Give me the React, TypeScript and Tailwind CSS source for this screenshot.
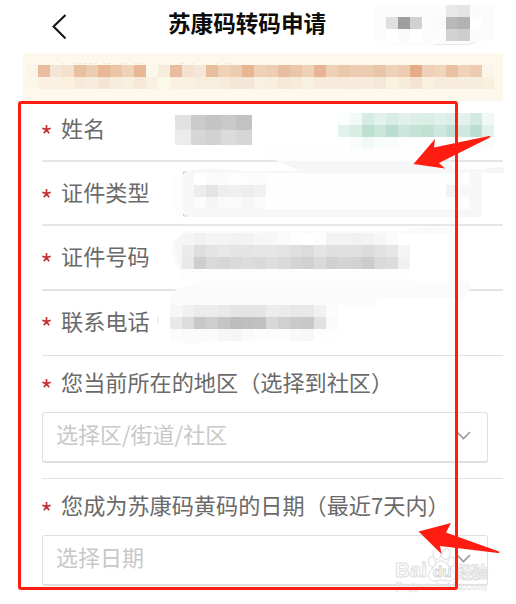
import React from 'react';
import { clsx } from 'clsx';

type MosaicProps = {
  x: number;
  y: number;
  w?: number;
  h?: number;
  rows: string[];
};

// One row per string, cells separated by spaces, "-" leaves a cell open
function Mosaic({ x, y, w = 12, h = 12, rows }: MosaicProps) {
  return (
    <g shapeRendering="crispEdges">
      {rows.map((row, r) =>
        row.split(' ').map((color, c) =>
          color === '-' ? null : (
            <rect key={`${r}-${c}`} x={x + c * w} y={y + r * h} width={w} height={h} fill={`#${color}`} />
          )
        )
      )}
    </g>
  );
}

function Label({ children }: { children: React.ReactNode }) {
  return (
    <div className="flex items-center whitespace-nowrap text-[22.15px] leading-8 text-[#6a6a6a]">
      <svg className="mr-[10px] mt-[4px] h-[9px] w-[9px] shrink-0" viewBox="0 0 9 9" fill="none" stroke="#c23236" strokeWidth="1.7">
        <path d="M4.5 0v4.6M.3 3.2l4.2 1.4M8.7 3.2 4.5 4.6M1.9 8.3l2.6-3.7M7.1 8.3 4.5 4.6" />
      </svg>
      {children}
    </div>
  );
}

function SelectBox({ placeholder, className }: { placeholder: string; className?: string }) {
  return (
    <div className={clsx('flex h-[51px] w-[446px] items-center justify-between rounded-[3px] border-[1.5px] border-b-2 border-[#e0e0e0] pl-[13px] pr-4', className)}>
      <span className="mt-[-8px] text-[22px] leading-8 text-[#c8c8c8]">{placeholder}</span>
      <svg className="mt-[-3px] h-[9px] w-[15px]" viewBox="0 0 15 9" fill="none" stroke="#999" strokeWidth="1.6">
        <path d="M1 1l6.5 6.5L14 1" />
      </svg>
    </div>
  );
}

function Redactions() {
  return (
    <svg className="pointer-events-none absolute left-0 top-0 h-[604px] w-[516px]" viewBox="0 0 516 604">
      {/* top right buttons */}
      <rect x="374" y="5" width="120" height="36" rx="5" fill="#fcfcfc" />
      <path d="M386 41h50l38-1v4l-4 2h-80z" fill="#fcfcfc" />
      <path d="M435 44.5h34l7-3" fill="none" stroke="#e9e9e9" />
      <Mosaic
        x={386}
        y={5}
        rows={[
          '- - - - - e9e9e9 e5e5e5 fbfbfb',
          'e0e0e0 9e9e9e d1d1d1 - fafafa b8b8b8 b2b2b2 ffffff',
          'ffffff fafafa ffffff - fcfcfc d3d3d3 cecece fbfbfb',
        ]}
      />

      {/* notice text */}
      <Mosaic
        x={26}
        y={65}
        rows={[
          'fbf5e7 e9bca0 f5e5d6 f3e0cd e8bf9f eccdb1 e7b796 ebc5a5 efd2b8 e8b895 fbf7ea f6ecdb e9bca0 f4e1cf f5e7d7 e8bd9b efd2b8 edcdb0 e7b58f efd1b7 eecdb3 e8bea0 e9c7a8 efd2b6 e7b593 eecfb7 eac8aa eccdb3 edcdb2 eac4a7 efd0b8 edccb2 e5ac87 efd0b8 f0d5bd eac0a3 f0d2b9 eecab0 fcf4e9',
          'fbf8e8 fbf1e3 faf1e2 faf1e1 f7ead9 f7ecdd f5e5d3 f8eddd f8f0df f5e8d7 f8f0e3 fcfae7 f9f0e2 f9f0e1 f8eedd f8eedd f7ecdb f5e6d6 f5e7d7 f9f1df f9efde f6e8d7 f7ead8 f8f0e0 f7ead8 f6ebdc f6ebdb f7ead8 f6ebdc f6e8d8 faf1df f7ecda f5e4d2 f9f0e0 f7eddd f8eddd f8eedf f7eddc f9efdd',
        ]}
      />
      <path d="M62 63.5h3M74 63.5h25M103 63.5h8M122 63.5h6M134 63.5h11M181 63.5h4M191 63.5h3M215 63.5h4M225 63.5h6" stroke="#f6e6d2" strokeWidth="1" strokeDasharray="3 2" />

      {/* name */}
      <g shapeRendering="crispEdges">
        <rect x="175" y="115" width="16" height="15" fill="#e2e2e2" />
        <rect x="191" y="115" width="14" height="15" fill="#cbcbcb" />
        <rect x="205" y="115" width="16" height="15" fill="#c5c5c5" />
        <rect x="221" y="115" width="15" height="15" fill="#c9c9c9" />
        <rect x="236" y="115" width="16" height="15" fill="#c2c2c2" />
        <rect x="175" y="130" width="16" height="15" fill="#ececec" />
        <rect x="191" y="130" width="14" height="15" fill="#d6d6d6" />
        <rect x="205" y="130" width="16" height="15" fill="#d2d2d2" />
        <rect x="221" y="130" width="15" height="15" fill="#dbdbdb" />
        <rect x="236" y="130" width="16" height="15" fill="#d6d6d6" />
      </g>
      <Mosaic
        x={338}
        y={113}
        rows={[
          'fafefc f2f9f6 d6ece2 e2f1eb d7ece2 e1f0e9 dceee6 daeee5 e0f1ea dceee6 e2f1eb d4eae1 f2f8f6',
          'e1f2ea d9ede4 bde0d2 cbe6db b9ddcf cce6dd c4e2d6 bfe0d3 cde7de bfe0d2 d0e8df bddfd1 e3f1ec',
          '- fafcfb f2f8f6 f8fcfa fafcfb fcfefd fdfefe - - fafdfc - fafcfb fafcfb',
        ]}
      />

      {/* document type */}
      <path d="M277 161h173l6 9 48-3v6H303q-14-7-26-12z" fill="#f6f6f6" />
      <path d="M265 150h160v11H277z" fill="#fdfdfd" />
      <path d="M450 163l4 6 28 0 21-3v-3z" fill="#fff" />
      <rect x="173" y="172" width="309" height="45" rx="13" fill="#fcfcfc" />
      <path d="M183 171q30-5 60 0h239v46H183z" fill="#f7f7f7" />
      <rect x="194" y="173" width="276" height="36" fill="#fefefe" />
      <path d="M183.500 174v-2h3M183.500 214v2h3" fill="none" stroke="#ccc" />
      <Mosaic
        x={194}
        y={173}
        rows={[
          'ffffff fbfbfb fbfbfb fdfdfd fdfdfd fcfcfc',
          'ededed e4e4e4 eeeeee f0f0f0 eeeeee f1f1f1',
          'fcfcfc f5f5f5 fafafa fafafa f6f6f6 fafafa',
        ]}
      />
      <Mosaic x={446} y={185} rows={['f2f2f2 f8f8f8']} />

      {/* document number */}
      <path d="M185 231h215l32-5q15 0 22 7H410v41H183q-18-18-8-36z" fill="#fafafa" />
      <path d="M177 240q4-7 15-7h205v36H182q-11-12-5-29z" fill="#f6f6f6" />
      <Mosaic
        x={182}
        y={233}
        rows={[
          'f5f5f5 f1f1f1 f4f4f4 f4f4f4 f2f2f2 f3f3f3 f6f6f6 f7f7f7 fafafa fdfdfd ffffff fdfdfd f3f3f3 f3f3f3 f1f1f1 f3f3f3 f6f6f6 fbfbfb ffffff',
          'ebebeb dedede e4e4e4 e7e7e7 e4e4e4 e4e4e4 e6e6e6 e6e6e6 e4e4e4 dfdfdf dcdcdc e4e4e4 dfdfdf e0e0e0 e0e0e0 dcdcdc e1e1e1 e6e6e6 f5f5f5',
          'e8e8e8 cecece d9d9d9 d6d6d6 dadada dddddd dadada dedede dadada d4d4d4 d1d1d1 dadada d1d1d1 d4d4d4 d2d2d2 cccccc d9d9d9 dcdcdc f1f1f1',
          'fdfdfd fdfdfd fdfdfd fefefe fefefe fefefe fefefe fefefe fefefe fefefe fefefe fefefe fefefe fefefe fefefe fefefe fefefe fefefe fefefe',
        ]}
      />

      {/* phone */}
      <path d="M170 294q10-8 33-13h266l2 4-5 13h-88l-2 7H170z" fill="#fbfbfb" />
      <rect x="157" y="316" width="2" height="8" fill="#f0f0f0" />
      <path d="M173 328h156v12H214q-32 10-41-5z" fill="#fbfbfb" />
      <Mosaic
        x={170}
        y={305}
        rows={[
          'f7f7f7 f1f1f1 ebebeb ececec e9e9e9 e5e5e5 e4e4e4 e5e5e5 ededed ebebeb e8e8e8 e8e8e8 f1f1f1 fcfcfc',
          'e9e9e9 dcdcdc c7c7c7 cecece c5c5c5 bdbdbd bfbfbf c1c1c1 d8d8d8 d0d0d0 cacaca c8c8c8 e1e1e1 fafafa',
          'fbfbfb fafafa fafafa fbfbfb f7f7f7 f6f6f6 fafafa fdfdfd fcfcfc fdfdfd f9f9f9 f7f7f7 fefefe fefefe',
        ]}
      />
    </svg>
  );
}

function Annotations() {
  return (
    <>
      <div className="absolute left-[18px] top-[101px] h-[489px] w-[440px] rounded-[3px] border-[3px] border-[#ff1d12]" />
      <svg className="pointer-events-none absolute left-0 top-0 h-[604px] w-[516px]" viewBox="0 0 516 604" fill="#ff1d12">
        <path d="M413.500 164 435 139l-1 8.500L489 136q3 0 0 2l-50 25 6 5.500z" />
        <path d="M418.500 531.500 451 523l-5 9.500 53 19q1 1.500-1 1.500l-58-7 1.500 8z" />
      </svg>
    </>
  );
}

function Watermark() {
  return (
    <svg
      className="pointer-events-none absolute left-[390px] top-[544px] h-[52px] w-[106px] font-['Liberation_Sans','Noto_Sans_CJK_SC',sans-serif]"
      viewBox="0 0 106 52"
      fill="#fff"
      fillOpacity=".6"
      stroke="#dedede"
      strokeWidth="1"
    >
      <text x="5" y="33" fontSize="21" fontWeight="700" textLength="32" lengthAdjust="spacingAndGlyphs">Bai</text>
      <ellipse cx="42" cy="18" rx="3.500" ry="5" transform="rotate(-15 42 18)" />
      <ellipse cx="47" cy="10" rx="4" ry="5.500" />
      <ellipse cx="56" cy="10" rx="4" ry="5.500" transform="rotate(15 56 10)" />
      <ellipse cx="61.500" cy="18" rx="3.500" ry="5" transform="rotate(15 61.500 18)" />
      <path d="M51 17c-5 0-6 5-9 8s-6 8-1 11c4 2 6 0 11 0s9 2 12-1c4-5-1-8-4-11s-4-7-9-7z" />
      <text x="43" y="33" fontSize="15" fontWeight="700" strokeWidth=".9" stroke="#d2d2d2">du</text>
      <text x="67" y="34" fontSize="16" fontWeight="700" textLength="31" strokeWidth=".9">经验</text>
      <text x="6" y="46" fontSize="10" fontWeight="700" textLength="91" strokeWidth=".5">jingyan.baidu.com</text>
    </svg>
  );
}

export default function App() {
  return (
    <div className="relative h-[604px] w-[516px] overflow-hidden bg-white font-['Noto_Sans_CJK_SC',sans-serif]">
      <header className="flex h-[53px] items-center pl-[52px]">
        <svg className="h-[25px] w-[14px]" viewBox="0 0 14 25" fill="none" stroke="#111" strokeWidth="2">
          <path d="M13.500 1 1.500 12.500l12 12" />
        </svg>
        <h1 className="ml-[102px] mt-[-8px] text-[22.6px] font-bold leading-8 text-[#0c0c0c]">苏康码转码申请</h1>
      </header>

      <div className="ml-[23px] h-[48px] w-[480px] border-t-[3px] border-[#fdfaed] bg-[#fcf9ec]" />

      <main className="pl-[42px] pr-[13px]">
        <div className="flex h-[61px] items-center border-b-2 border-[#e6e6e6] pb-[7px]">
          <Label>姓名</Label>
        </div>
        <div className="flex h-[64px] items-center border-b-2 border-[#e6e6e6] pb-[4px]">
          <Label>证件类型</Label>
        </div>
        <div className="flex h-[65px] items-center border-b-2 border-[#e3e3e3] pb-[5px]">
          <Label>证件号码</Label>
        </div>
        <div className="flex h-[65px] items-center border-b border-[#e0e0e0] pb-[7px]">
          <Label>联系电话</Label>
        </div>
        <div className="h-[123px] border-b border-[#e0e0e0] pt-[9px]">
          <Label>您当前所在的地区（选择到社区）</Label>
          <SelectBox placeholder="选择区/街道/社区" className="mt-[15px]" />
        </div>
        <div className="pt-[9px]">
          <Label>您成为苏康码黄码的日期（最近7天内）</Label>
          <SelectBox placeholder="选择日期" className="mt-[15px]" />
        </div>
      </main>

      <Redactions />
      <Watermark />
      <Annotations />
    </div>
  );
}
